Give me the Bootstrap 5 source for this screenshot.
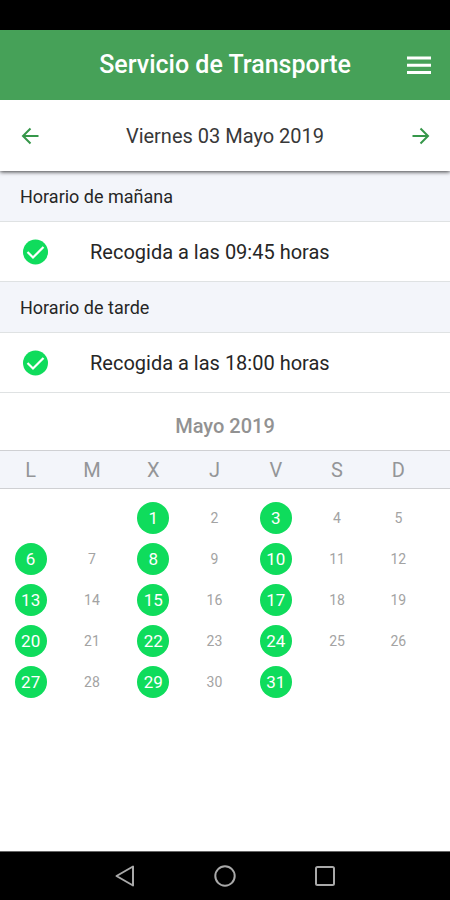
<!DOCTYPE html>
<html lang="es">
<head>
<meta charset="utf-8">
<meta name="viewport" content="width=device-width, initial-scale=1">
<title>Servicio de Transporte</title>
<link href="https://cdn.jsdelivr.net/npm/bootstrap@5.3.0/dist/css/bootstrap.min.css" rel="stylesheet">
<style>
  body { font-family: Roboto, "Liberation Sans", sans-serif; background: #fff; color: #262626; }
  svg { display: block; }
  .status-strip { height: 30px; background: #000; }
  .app-header { height: 70px; background: #46a158; color: #fff; z-index: 2; }
  .side-slot { width: 62px; }
  .app-title { font-size: 25px; line-height: 30px; font-weight: 500; }
  .date-bar { height: 71px; background: #fff; box-shadow: 0 1px 4px rgba(0, 0, 0, .75); z-index: 1; }
  .date-text { font-size: 20px; line-height: 24px; color: #383838; }
  .date-bar .btn { color: #36974a; }
  .slot-head { height: 50px; padding: 2px 20px 0; font-size: 18px; line-height: 24px; background: #f3f5fa; }
  .slot-row { height: 61px; padding: 0 22px; gap: 42px; font-size: 20px; line-height: 24px; border-top: 1px solid #dfe2e3; border-bottom: 1px solid #dfe2e3; }
  .month-title { height: 58px; padding-top: 8px; font-size: 20px; line-height: 24px; font-weight: 500; color: #929292; }
  .cal-pad { padding-right: 21px; }
  .cal-table { table-layout: fixed; width: 100%; text-align: center; }
  .cal-table th { height: 37px; padding: 0; font-size: 20px; line-height: 24px; font-weight: 400; color: #949598; background: #f3f5fa; }
  .cal-table td { height: 41px; padding: 0; font-size: 14px; line-height: 20px; color: #a3a3a3; vertical-align: middle; }
  .cal-table thead tr { box-shadow: 30px 0 0 #f3f5fa, 0 -1px 0 #cfd0d3, 30px -1px 0 #cfd0d3, 0 1px 0 #cfd0d3, 30px 1px 0 #cfd0d3; }
  .cal-table .spacer-row td { height: 9px; }
  .day-on { width: 32px; height: 32px; background: #0fdc5c; color: #fff; font-size: 17px; }
  .nav-strip { height: 49px; gap: 76px; background: #000; border-top: 1px solid #666; color: #a9a9a9; }
</style>
<script src="https://cdn.jsdelivr.net/npm/bootstrap@5.3.0/dist/js/bootstrap.bundle.min.js"></script>
</head>
<body>
<div class="d-flex flex-column min-vh-100 overflow-hidden">
  <div class="status-strip"></div>
  <header class="app-header d-flex align-items-center position-relative">
    <div class="side-slot"></div>
    <h1 class="app-title flex-grow-1 text-center mb-0">Servicio de Transporte</h1>
    <div class="side-slot d-flex justify-content-center">
      <button class="btn p-0 border-0 text-white" type="button" aria-label="Menú">
        <svg width="26" height="20" viewBox="0 0 26 20" stroke="currentColor" stroke-width="3"><path d="M1 3h24M1 10.300h24M1 17.500h24"/></svg>
      </button>
    </div>
  </header>
  <div class="date-bar d-flex align-items-center justify-content-between position-relative px-3">
    <button class="btn p-1 border-0" type="button" aria-label="Día anterior">
      <svg width="20" height="20" viewBox="0 0 20 20" fill="none" stroke="currentColor" stroke-width="2"><path d="M18.500 10H3M10.500 2.500 3 10l7.500 7.500"/></svg>
    </button>
    <div class="date-text">Viernes 03 Mayo 2019</div>
    <button class="btn p-1 border-0" type="button" aria-label="Día siguiente">
      <svg width="20" height="20" viewBox="0 0 20 20" fill="none" stroke="currentColor" stroke-width="2"><path d="M2.500 10H18M10.500 2.500 18 10l-7.500 7.500"/></svg>
    </button>
  </div>
  <main class="flex-grow-1">
    <h2 class="slot-head d-flex align-items-center fw-normal mb-0">Horario de mañana</h2>
    <div class="slot-row d-flex align-items-center">
      <svg width="26" height="26" viewBox="0 0 26 26" fill="none"><circle cx="13.500" cy="13" r="12.500" fill="#0fdc5c"/><path d="m5.500 13 5.500 5.500L21.500 8" stroke="#fff" stroke-width="2.200"/></svg>
      <span>Recogida a las 09:45 horas</span>
    </div>
    <h2 class="slot-head d-flex align-items-center fw-normal mb-0">Horario de tarde</h2>
    <div class="slot-row d-flex align-items-center">
      <svg width="26" height="26" viewBox="0 0 26 26" fill="none"><circle cx="13.500" cy="13" r="12.500" fill="#0fdc5c"/><path d="m5.500 13 5.500 5.500L21.500 8" stroke="#fff" stroke-width="2.200"/></svg>
      <span>Recogida a las 18:00 horas</span>
    </div>
    <h2 class="month-title d-flex align-items-center justify-content-center mb-0" id="month">Mayo 2019</h2>
    <div class="cal-pad">
      <table class="cal-table" aria-labelledby="month">
        <thead><tr><th scope="col">L</th><th scope="col">M</th><th scope="col">X</th><th scope="col">J</th><th scope="col">V</th><th scope="col">S</th><th scope="col">D</th></tr></thead>
        <tbody>
          <tr class="spacer-row"><td colspan="7"></td></tr>
          <tr><td></td><td></td><td><span class="day-on rounded-circle d-inline-flex align-items-center justify-content-center align-middle">1</span></td><td>2</td><td><span class="day-on rounded-circle d-inline-flex align-items-center justify-content-center align-middle">3</span></td><td>4</td><td>5</td></tr>
          <tr><td><span class="day-on rounded-circle d-inline-flex align-items-center justify-content-center align-middle">6</span></td><td>7</td><td><span class="day-on rounded-circle d-inline-flex align-items-center justify-content-center align-middle">8</span></td><td>9</td><td><span class="day-on rounded-circle d-inline-flex align-items-center justify-content-center align-middle">10</span></td><td>11</td><td>12</td></tr>
          <tr><td><span class="day-on rounded-circle d-inline-flex align-items-center justify-content-center align-middle">13</span></td><td>14</td><td><span class="day-on rounded-circle d-inline-flex align-items-center justify-content-center align-middle">15</span></td><td>16</td><td><span class="day-on rounded-circle d-inline-flex align-items-center justify-content-center align-middle">17</span></td><td>18</td><td>19</td></tr>
          <tr><td><span class="day-on rounded-circle d-inline-flex align-items-center justify-content-center align-middle">20</span></td><td>21</td><td><span class="day-on rounded-circle d-inline-flex align-items-center justify-content-center align-middle">22</span></td><td>23</td><td><span class="day-on rounded-circle d-inline-flex align-items-center justify-content-center align-middle">24</span></td><td>25</td><td>26</td></tr>
          <tr><td><span class="day-on rounded-circle d-inline-flex align-items-center justify-content-center align-middle">27</span></td><td>28</td><td><span class="day-on rounded-circle d-inline-flex align-items-center justify-content-center align-middle">29</span></td><td>30</td><td><span class="day-on rounded-circle d-inline-flex align-items-center justify-content-center align-middle">31</span></td><td></td><td></td></tr>
        </tbody>
      </table>
    </div>
  </main>
  <nav class="nav-strip d-flex align-items-center justify-content-center" aria-label="Sistema">
    <button class="btn p-0 border-0 text-reset" type="button" aria-label="Atrás"><svg width="24" height="24" viewBox="0 0 24 24" fill="none" stroke="currentColor" stroke-width="2" stroke-linejoin="round"><path d="M20 2.500v19L3.500 12z"/></svg></button>
    <button class="btn p-0 border-0 text-reset" type="button" aria-label="Inicio"><svg width="24" height="24" viewBox="0 0 24 24" fill="none" stroke="currentColor" stroke-width="2"><circle cx="12" cy="12" r="9.700"/></svg></button>
    <button class="btn p-0 border-0 text-reset" type="button" aria-label="Recientes"><svg width="24" height="24" viewBox="0 0 24 24" fill="none" stroke="currentColor" stroke-width="2"><rect x="3" y="3" width="18" height="18" rx="1.500"/></svg></button>
  </nav>
</div>
</body>
</html>
